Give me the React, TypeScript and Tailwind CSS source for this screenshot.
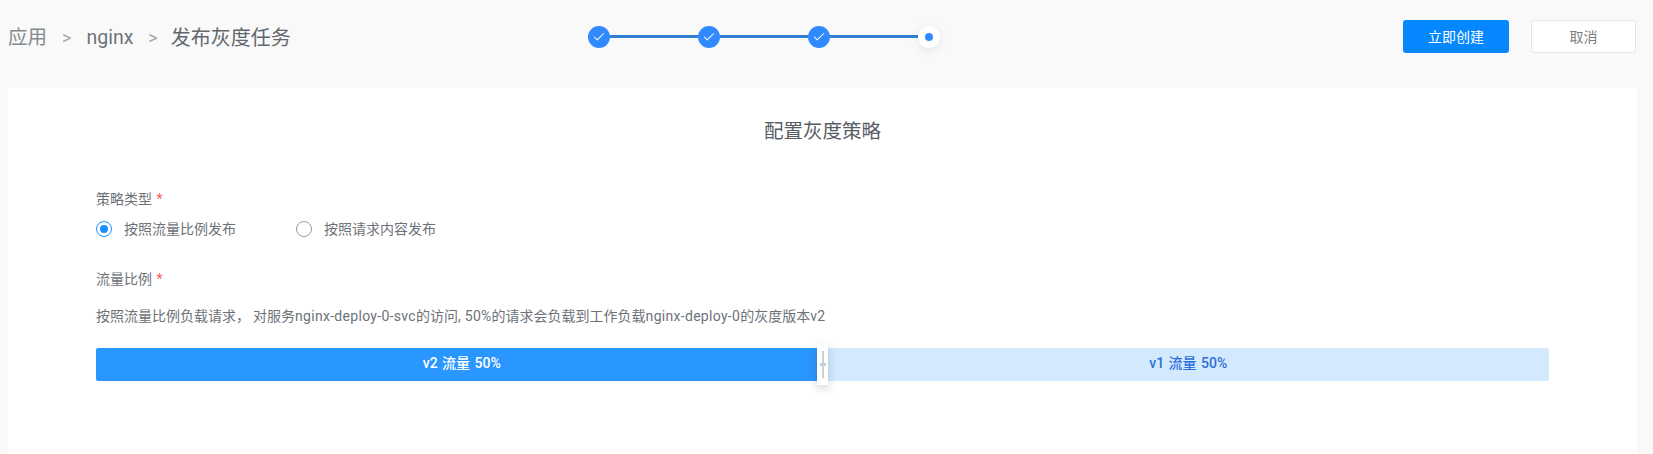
import React from 'react'
import { Check } from 'lucide-react'

const font = "font-['Roboto','Noto_Sans_CJK_SC',sans-serif]"

const Step = ({ current }: { current?: boolean }) =>
  current ? (
    <div className="w-[22px] h-[22px] rounded-full bg-white flex items-center justify-center shadow-[0_2px_8px_rgba(60,80,120,0.12)]">
      <div className="w-2 h-2 rounded-full bg-[#3089ff]" />
    </div>
  ) : (
    <div className="w-[22px] h-[22px] rounded-full bg-[#3089ff] flex items-center justify-center">
      <Check className="w-3.5 h-3.5 text-white" strokeWidth={1.75} />
    </div>
  )

const Line = () => <div className="w-[88px] h-[3px] bg-[#2f80d0]" />

const Label = ({ children }: { children: React.ReactNode }) => (
  <div className="text-sm leading-5 text-[#6d7278]">
    {children} <span className="ml-px text-[#f0605a]">*</span>
  </div>
)

const Radio = ({ checked, text }: { checked?: boolean; text: string }) => (
  <div className="flex items-center gap-[12px]">
    {checked ? (
      <div className="w-4 h-4 rounded-full border border-[#1890ff] flex items-center justify-center">
        <div className="w-2 h-2 rounded-full bg-[#1890ff]" />
      </div>
    ) : (
      <div className="w-4 h-4 rounded-full border border-[#8f9bb3]" />
    )}
    <span className="text-sm leading-5 text-[#6d7278]">{text}</span>
  </div>
)

export default function App() {
  return (
    <div className={`${font} w-[1653px] h-[454px] overflow-hidden bg-[#f9f9f9]`}>
      {/* header */}
      <div className="h-[88px] pl-2 pr-[17px] pb-[15px] flex items-center relative">
        <div className="flex items-center text-[19.5px] w-[580px] pt-[2px]">
          <span className="text-[#858a8f]">应用</span>
          <span className="mx-[15px] text-[18px] text-[#a3a6aa]">&gt;</span>
          <span className="text-[#6f7479]">nginx</span>
          <span className="ml-[15px] mr-[13px] text-[18px] text-[#a3a6aa]">&gt;</span>
          <span className="text-[20px] text-[#62676d]">发布灰度任务</span>
        </div>
        <div className="flex items-center">
          <Step />
          <Line />
          <Step />
          <Line />
          <Step />
          <Line />
          <Step current />
        </div>
        <div className="ml-auto flex items-center gap-[22px]">
          <button className="w-[106px] h-[33px] rounded-[3px] bg-[#0588ff] text-white text-sm">立即创建</button>
          <button className="w-[105px] h-[33px] rounded-[3px] bg-white border border-[#e1e5ee] text-[#7b7f84] text-sm">取消</button>
        </div>
      </div>

      {/* card */}
      <div className="ml-2 w-[1629px] h-[366px] bg-white pt-[30px] px-[88px]">
        <div className="text-center text-[19.5px] leading-[27px] text-[#565c63]">配置灰度策略</div>

        <div className="mt-[44px]">
          <Label>策略类型</Label>
          <div className="mt-[10px] flex items-center gap-[60px]">
            <Radio checked text="按照流量比例发布" />
            <Radio text="按照请求内容发布" />
          </div>
        </div>

        <div className="mt-[30px]">
          <Label>流量比例</Label>
          <div className="mt-[17px] text-sm leading-5 text-[#6d7278]">
            按照流量比例负载请求<span className="mr-[3px]">，</span>对服务
            <span className="tracking-[0.3px]">nginx-deploy-0-svc</span>的访问
            <span className="tracking-[0.3px]">, 50%</span>的请求会负载到工作负载
            <span className="tracking-[0.3px]">nginx-deploy-0</span>的灰度版本
            <span className="tracking-[0.3px]">v2</span>
          </div>
        </div>

        {/* traffic slider */}
        <div className="mt-[22px] w-[1453px] h-[33px] flex relative text-sm font-medium">
          <div className="flex-1 rounded-l-[2px] bg-[#2997ff] text-white flex items-center justify-center pb-1 pl-[5px] [word-spacing:1px]">v2 流量 50%</div>
          <div className="flex-1 rounded-r-[2px] bg-[#d2e9fe] text-[#2f6fdc] flex items-center justify-center pb-1 pl-[5px] [word-spacing:1px]">v1 流量 50%</div>
          <div className="absolute left-[721px] -top-1 w-[11px] h-[41px] bg-white shadow-[0_3px_8px_rgba(60,70,90,0.25)] flex items-center justify-center">
            <div className="w-[2px] h-[27px] bg-[#c9d0d8] relative">
              <div className="absolute left-[-2px] top-[12px] w-[6px] h-[3px] bg-[#c9d0d8]" />
            </div>
          </div>
        </div>
      </div>
    </div>
  )
}
